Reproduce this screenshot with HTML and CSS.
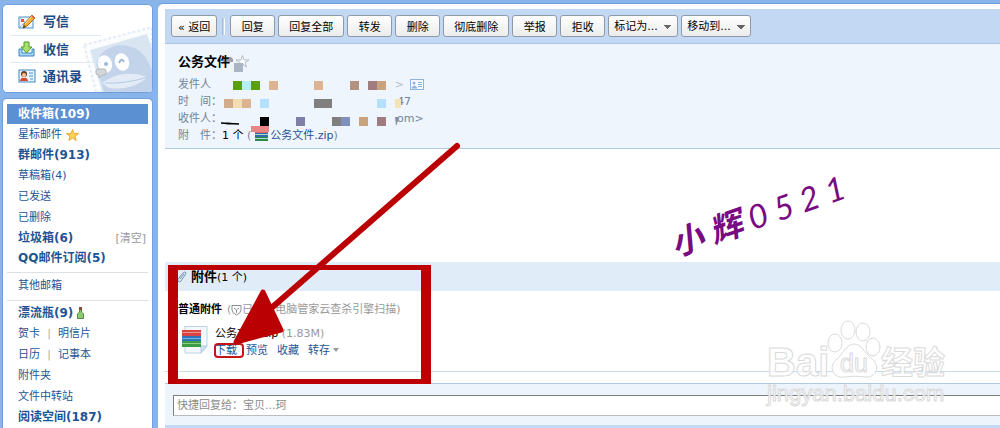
FILE: index.html
```
<!DOCTYPE html>
<html lang="zh-CN">

<head>
    <meta charset="utf-8">
    <title>QQ邮箱 - 公务文件</title>
    <link rel="stylesheet" href="styles.css">
</head>

<body>
    <div class="page">
        <div class="sidebar">
            <div class="card mainNav">
                <svg class="stamp" width="70" height="65" viewBox="0 0 70 65">
                    <path d="M2 18 L67 1 L70 1 V65 H14 Z" fill="#fbfcfe" stroke="#e3ebf5" stroke-width="2" stroke-dasharray="3 2" />
                    <path d="M8 23 L65 7 L70 22 V65 H20 Z" fill="#dae5f2" />
                    <path d="M14 36 Q20 20 38 18 Q62 18 70 44 V65 H22 Z" fill="#c3d4ea" />
                    <ellipse cx="23" cy="37" rx="7" ry="9" transform="rotate(-18 23 37)" fill="#fff" />
                    <ellipse cx="40" cy="35" rx="7" ry="9" transform="rotate(-18 40 35)" fill="#fff" />
                    <circle cx="24" cy="37" r="2" fill="#9db7d9" />
                    <path d="M37 36 q3 -6 5 -1" fill="none" stroke="#9db7d9" stroke-width="2" />
                    <path d="M20 56 Q40 41 66 50 Q50 64 27 61 Z" fill="#e3ecf6" />
                    <path d="M23 56 Q44 57 66 50" fill="none" stroke="#b4c8e1" stroke-width="1" />
                    <path d="M16 42 h6 q2 0 2 2 v2 q0 2 -2 2 h-2 l-3 3 v-3 h-1 q-2 0 -2 -2 v-2 q0 -2 2 -2z" fill="#d4d6d9" stroke="#b3b7bd" />
                </svg>
                <a class="navItem" href="#">
                    <svg width="18" height="16" viewBox="0 0 18 16">
                        <rect x="1" y="3" width="14" height="11" fill="#eef7ff" stroke="#4b8fc9" />
                        <path d="M2 4 l5 4 M2 13 l5 -5" stroke="#8fc0e6" />
                        <rect x="3" y="5" width="3" height="3" fill="#e0573b" />
                        <path d="M5 14 L6 10 L14 1 L17 4 L9 12 Z" fill="#fbb034" stroke="#b56a12" />
                        <path d="M7 10 L14 2" stroke="#ffe29a" />
                        <path d="M13 2 L14 1 L17 4 L16 5 Z" fill="#e5654a" />
                        <path d="M5 14 L6 11 L8 13 Z" fill="#5b3c1d" />
                    </svg>
                    写信
                </a>
                <a class="navItem" href="#">
                    <svg width="18" height="16" viewBox="0 0 18 16">
                        <path d="M1 8 H4 V12 H14 V8 H16 V15 H1 Z" fill="#a9d4f3" stroke="#3d85c0" />
                        <path d="M6 1 H11 V6 H14 L8.500 12 L3 6 H6 Z" fill="#a7e06b" stroke="#4e9a2c" />
                    </svg>
                    收信
                </a>
                <a class="navItem" href="#">
                    <svg width="18" height="16" viewBox="0 0 18 16">
                        <rect x="1" y="2" width="16" height="12" fill="#e6f4ff" stroke="#3f87c4" />
                        <circle cx="6" cy="6" r="3" fill="#6b3a1e" />
                        <circle cx="6" cy="7" r="2" fill="#f6c597" />
                        <path d="M2 13 Q3 9 6 10 Q9 9 10 13 Z" fill="#d9482b" />
                        <path d="M11 5 h4 M11 8 h4 M12 11 h3" stroke="#4c93cd" />
                    </svg>
                    通讯录
                </a>
            </div>

            <div class="card folders">
                <ul class="folderList">
                    <li class="unread selected"><a href="#">收件箱(109)</a></li>
                    <li>
                        <a href="#">星标邮件</a>
                        <svg class="inlineIcon" width="13" height="12" viewBox="0 0 13 12">
                            <path d="M6.500 0.500 L8 4.500 L12.500 4.600 L9 7.300 L10.200 11.500 L6.500 9 L2.800 11.500 L4 7.300 L0.500 4.600 L5 4.500 Z" fill="#ffd152" stroke="#e5a83a" />
                        </svg>
                    </li>
                    <li class="unread"><a href="#">群邮件(913)</a></li>
                    <li><a href="#">草稿箱(4)</a></li>
                    <li><a href="#">已发送</a></li>
                    <li><a href="#">已删除</a></li>
                    <li class="unread"><a href="#">垃圾箱(6)</a><a class="clear" href="#">[清空]</a></li>
                    <li class="unread"><a href="#">QQ邮件订阅(5)</a></li>
                </ul>
                <ul class="folderList">
                    <li><a href="#">其他邮箱</a></li>
                </ul>
                <ul class="folderList">
                    <li class="unread">
                        <a href="#">漂流瓶(9)</a>
                        <svg class="inlineIcon" width="7" height="12" viewBox="0 0 7 12">
                            <path d="M2.500 3 H4.500 V5 L6.500 7 V11.500 H0.500 V7 L2.500 5 Z" fill="#8fc973" stroke="#4f8f3c" />
                            <rect x="2" y="0" width="3" height="3" fill="#8b4a3a" />
                        </svg>
                    </li>
                    <li><a href="#">贺卡</a><span class="bar">|</span><a href="#">明信片</a></li>
                    <li><a href="#">日历</a><span class="bar">|</span><a href="#">记事本</a></li>
                    <li><a href="#">附件夹</a></li>
                    <li><a href="#">文件中转站</a></li>
                    <li class="unread"><a href="#">阅读空间(187)</a></li>
                </ul>
            </div>
        </div>

        <div class="main">
            <div class="toolbar">
                <button type="button" class="btn">« 返回</button>
                <span class="divider"></span>
                <button type="button" class="btn">回复</button>
                <button type="button" class="btn">回复全部</button>
                <button type="button" class="btn">转发</button>
                <button type="button" class="btn">删除</button>
                <button type="button" class="btn">彻底删除</button>
                <button type="button" class="btn">举报</button>
                <button type="button" class="btn">拒收</button>
                <select class="btn menu" aria-label="标记为">
                    <option>标记为...</option>
                </select>
                <select class="btn menu" aria-label="移动到">
                    <option>移动到...</option>
                </select>
            </div>

            <div class="mailInfo">
                <h1 class="subject">公务文件</h1>
                <div class="infoRow">
                    <span class="label">发件人</span>
                    <span class="senderEnd">&gt;</span>
                    <svg width="14" height="11" viewBox="0 0 14 11">
                        <rect x="0.500" y="0.500" width="13" height="10" fill="#f3f9ff" stroke="#8db4dc" />
                        <circle cx="4" cy="4" r="1.500" fill="#8db4dc" />
                        <path d="M2 9 q2 -4 5 0z M8 3.500 h4 M8 5.500 h4 M8 7.500 h4" fill="#8db4dc" stroke="#8db4dc" />
                    </svg>
                </div>
                <div class="infoRow"><span class="label">时　间：</span><span class="rowEnd">47</span></div>
                <div class="infoRow"><span class="label">收件人：</span><span class="rowEnd">om&gt;</span></div>
                <div class="infoRow">
                    <span class="label">附　件：</span>
                    <span><span class="count">1 个</span> (</span>
                    <svg class="zipSmall" width="13" height="11" viewBox="0 0 13 11">
                        <rect width="13" height="3" fill="#d96a6a" />
                        <rect y="3" width="13" height="4" fill="#2f6cab" />
                        <rect y="7" width="13" height="4" fill="#2f8a48" />
                        <path d="M0 4.500 h13 M0 8.500 h13" stroke="#a8dcd0" />
                    </svg>
                    <span><a href="#">公务文件.zip</a>)</span>
                </div>

                <!-- star, and the blocks that hide the addresses -->
                <svg class="mosaic" width="240" height="90" viewBox="0 0 240 90">
                    <path d="M64.500 11.500 L66 16 H71 L67 18.500 L68.500 23 L64.500 20 L60.500 23 L62 18.500 L58 16 H63 Z" fill="#fbfdff" stroke="#b4bcc7" />
                    <path d="M45 13 h8 l2 2 v3 h-10z" fill="#22262c" opacity=".4" />
                    <rect x="56" y="19" width="9" height="9" fill="#a9b5c3" />
                    <rect x="55" y="37" width="9" height="9" fill="#5aa00c" />
                    <rect x="64" y="37" width="9" height="9" fill="#b4f0f0" />
                    <rect x="73" y="37" width="9" height="9" fill="#5aa00c" />
                    <rect x="91" y="37" width="9" height="9" fill="#dcb491" />
                    <rect x="136" y="37" width="9" height="9" fill="#dcb491" />
                    <rect x="172" y="37" width="9" height="9" fill="#b49180" />
                    <rect x="190" y="37" width="9" height="9" fill="#a07c80" />
                    <rect x="199" y="37" width="9" height="9" fill="#c8a37d" />
                    <rect x="46" y="55" width="9" height="9" fill="#d2aa8c" />
                    <rect x="55" y="55" width="9" height="9" fill="#f3deb4" />
                    <rect x="64" y="55" width="9" height="9" fill="#dcb491" />
                    <rect x="82" y="55" width="9" height="9" fill="#b4e0fb" />
                    <rect x="136" y="55" width="18" height="9" fill="#7f7f7f" />
                    <rect x="199" y="55" width="9" height="9" fill="#b4e0fb" />
                    <rect x="217" y="55" width="6" height="9" fill="#f5e3b8" />
                    <path d="M43 79 H50 L61 80 H50 Z" fill="#000" stroke="#000" />
                    <rect x="82" y="73" width="9" height="9" fill="#000" />
                    <rect x="118" y="73" width="9" height="9" fill="#7f7fa8" />
                    <rect x="154" y="73" width="9" height="9" fill="#7f7f7f" />
                    <rect x="163" y="73" width="9" height="9" fill="#7f91bb" />
                    <rect x="181" y="73" width="9" height="9" fill="#c8a37d" />
                    <rect x="199" y="73" width="9" height="9" fill="#a07c80" />
                    <path d="M217 73 h3 v4 l-2 5 z" fill="#8b8f96" />
                    <rect x="73" y="82" width="18" height="6" fill="#ea8585" />
                </svg>
            </div>

            <div class="mailBody">
                <div class="signature">
                    <span class="han">小</span><span class="han">辉</span><span>0</span><span>5</span><span>2</span><span>1</span>
                </div>
            </div>

            <div class="attachTitle">
                <svg width="10" height="13" viewBox="0 0 10 13">
                    <path d="M2 8 L6 3 Q8 1 9 3 Q9 4 8 5 L4 11 Q2 13 1 11 Q0 10 2 8 M3 9 L7 4" fill="none" stroke="#6f93bd" />
                </svg>
                <span><b>附件</b>(1 个)</span>
            </div>
            <div class="attachments">
                <div class="scanned">
                    <b>普通附件</b>
                    <span>(</span>
                    <svg width="11" height="12" viewBox="0 0 11 12">
                        <path d="M1 1.500 H10 V6 Q10 9 5.500 11 Q1 9 1 6 Z M3 4 L5.500 6 L8 4 M5.500 6 V9" fill="none" stroke="#8d8d8d" />
                    </svg>
                    <span>已经过电脑管家云查杀引擎扫描)</span>
                </div>
                <div class="file">
                    <svg width="26" height="29" viewBox="0 0 26 29">
                        <path d="M2 1.500 H25 V21 L19 28 H3 V2" fill="#f3f9fe" stroke="#b9d2e8" />
                        <path d="M25 21 L19 28 V21 Z" fill="#cfe2f3" stroke="#b0cbe3" />
                        <rect x="0" y="5" width="19" height="6" fill="#d94343" />
                        <rect x="0" y="11" width="19" height="5" fill="#2f74b8" />
                        <rect x="0" y="16" width="19" height="6" fill="#3c9c45" />
                        <path d="M0 7.500 h19" stroke="#f1938b" />
                        <path d="M0 13.500 h19" stroke="#79b2e2" />
                        <path d="M0 18.500 h19" stroke="#8ad084" />
                    </svg>
                    <div class="fileText">
                        <div>公务文件.zip <span class="size">(1.83M)</span></div>
                        <div class="fileLinks">
                            <a href="#">下载</a>
                            <a href="#">预览</a>
                            <a href="#">收藏</a>
                            <a href="#">转存<span class="caret"></span></a>
                        </div>
                    </div>
                </div>
            </div>

            <div class="quickReply">
                <input type="text" class="replyBox" aria-label="快捷回复" placeholder="快捷回复给：宝贝...珂">
            </div>
            <div class="footBar"></div>
        </div>
    </div>

    <svg class="callout" width="300" height="245" viewBox="0 0 300 245">
        <path fill="#bb0004" fill-rule="evenodd" d="M8 125 H271 V244 H8 Z M18 130 V239 H261 V130 Z" />
        <rect x="55" y="204" width="28" height="13" rx="3" fill="none" stroke="#c4161a" stroke-width="2" />
        <path d="M297 6 L108 171" stroke="#bb0004" stroke-width="6" stroke-linecap="round" />
        <path d="M103 152 L121 190 L76 202 Z" fill="#bb0004" stroke="#bb0004" stroke-width="5" stroke-linejoin="round" />
    </svg>

    <svg class="watermark" width="190" height="95" viewBox="0 0 190 95">
        <text class="wmBai" x="4" y="61">Bai</text>
        <g fill="#fff" stroke="#dadada">
            <ellipse cx="72" cy="28" rx="7" ry="9" />
            <ellipse cx="85" cy="15" rx="7" ry="9" />
            <ellipse cx="100" cy="17" rx="7" ry="9" />
            <ellipse cx="110" cy="32" rx="7" ry="9" />
            <path d="M91 29 C99 29 101 38 108 43 C118 50 114 63 102 62 C94 61 89 61 82 62 C69 64 65 51 74 44 C81 38 83 29 91 29 Z" />
        </g>
        <text class="wmDu" x="77" y="57">du</text>
        <text class="wmHan" x="118" y="59">经验</text>
        <text class="wmUrl" x="4" y="86">jingyan.baidu.com</text>
    </svg>
</body>

</html>
```

FILE: styles.css
```
* {
    box-sizing: border-box;
}

body {
    margin: 0;
    font-family: "DejaVu Sans", "Noto Sans CJK SC", sans-serif;
    font-size: 11px;
    line-height: 17px;
    color: #000;
    background: #88b4ea;
}

a {
    color: #1e5494;
    text-decoration: none;
}

.page {
    display: flex;
    gap: 5px;
    min-height: 100vh;
    padding: 4px 0 0 2px;
}

/* left column */
.sidebar {
    display: flex;
    flex-direction: column;
    flex: 0 0 151px;
    gap: 5px;
}

.card {
    background: #fff;
    border: 1px solid #6f9fdb;
    border-radius: 5px;
}

.mainNav {
    position: relative;
    padding: 3px 8px;
    overflow: hidden;
}

.stamp {
    position: absolute;
    right: 0;
    bottom: 0;
}

.navItem {
    position: relative;
    display: flex;
    align-items: center;
    gap: 7px;
    height: 27px;
    width: 90px;
    padding-left: 7px;
    font-size: 13px;
    font-weight: bold;
    color: #1c4a86;
}

.navItem + .navItem {
    border-top: 1px solid #dfe9f5;
}

.folders {
    flex: 1;
    padding: 5px 4px 0;
    border-bottom: 0;
    border-radius: 5px 5px 0 0;
}

.folderList {
    margin: 0;
    padding: 0;
    list-style: none;
}

.folderList + .folderList {
    margin-top: 4px;
    padding-top: 2px;
    border-top: 1px solid #dde1e6;
}

.folderList li {
    display: flex;
    align-items: center;
    height: 21px;
    padding-left: 11px;
}

.folderList .unread {
    height: 20px;
    font-size: 12px;
    font-weight: bold;
}

.folderList .selected {
    background: #5b91d2;
}

.selected a {
    color: #fff;
}

.inlineIcon {
    margin-left: 4px;
}

.bar {
    width: 18px;
    text-align: center;
    color: #b5a9a9;
}

.folderList .clear {
    margin-left: auto;
    padding-right: 2px;
    font-size: 11px;
    font-weight: normal;
    color: #999;
}

/* reading pane */
.main {
    display: flex;
    flex-direction: column;
    flex: 1;
    min-width: 0;
    padding: 5px 0 0 7px;
    background: #fff;
    border-radius: 5px 0 0 0;
    box-shadow: 0 -1px #6f9fdb;
}

.toolbar {
    display: flex;
    align-items: center;
    gap: 3px;
    height: 35px;
    padding-left: 6px;
    background: #c3d9f3;
    border-bottom: 1px solid #a9c6e6;
}

.btn {
    height: 22px;
    min-width: 45px;
    padding: 0 10px;
    font-family: inherit;
    font-size: 11px;
    color: #000;
    white-space: nowrap;
    background: linear-gradient(#fff, #ececec);
    border: 1px solid #8f9aa8;
    border-radius: 3px;
}

.toolbar .btn:first-child {
    padding: 0 6px;
}

.divider {
    width: 3px;
    height: 17px;
    margin: 0 2px;
    border-left: 1px solid #a3b9d4;
    border-right: 1px solid #fff;
}

.menu {
    width: 70px;
    padding: 0 5px;
    appearance: none;
    background: linear-gradient(45deg, transparent 50%, #666 50%) 55px 9px / 4px 4px no-repeat, linear-gradient(315deg, transparent 50%, #666 50%) 59px 9px / 4px 4px no-repeat, linear-gradient(#fff, #ececec);
}

.mailInfo {
    position: relative;
    padding: 9px 0 4px 13px;
    color: #74829a;
    background: #eff5fc;
    border-bottom: 1px solid #afc8e4;
}

.subject {
    margin: 0 0 5px;
    font-size: 13px;
    line-height: 18px;
    color: #000;
}

.infoRow {
    display: flex;
    align-items: center;
    height: 17px;
}

.label {
    width: 44px;
}

.senderEnd {
    width: 188px;
    padding-right: 6px;
    text-align: right;
    color: #b3bdca;
}

.rowEnd {
    margin-left: 175px;
}

.count {
    color: #000;
}

.zipSmall {
    margin: 0 2px 0 4px;
}

.mosaic {
    position: absolute;
    left: 13px;
    top: 0;
}

.mailBody {
    position: relative;
    min-height: 113px;
}

.signature {
    position: absolute;
    left: 501px;
    top: 46px;
    display: flex;
    align-items: center;
    gap: 8px;
    font-family: Lato, "Noto Sans CJK SC", sans-serif;
    font-size: 33px;
    font-style: italic;
    line-height: 40px;
    color: #780a82;
    transform: rotate(-19deg);
}

.han {
    font-weight: bold;
}

.attachTitle {
    display: flex;
    align-items: center;
    gap: 4px;
    height: 29px;
    padding-left: 12px;
    background: #e1ecf9;
}

.attachTitle b {
    font-size: 13px;
}

.attachments {
    padding: 10px 0 12px 13px;
    border-bottom: 1px solid #c9ddf1;
}

.scanned {
    display: flex;
    align-items: center;
    color: #999;
}

.scanned b {
    margin-right: 5px;
    color: #000;
}

.file {
    display: flex;
    align-items: flex-start;
    gap: 7px;
    padding: 7px 0 0 4px;
}

.size {
    color: #999;
}

.fileLinks {
    display: flex;
    gap: 9px;
}

.caret {
    display: inline-block;
    margin: 0 0 2px 3px;
    border: 3px solid transparent;
    border-top: 4px solid #999;
    border-bottom: 0;
}

.quickReply {
    margin-top: 11px;
    padding: 11px 0 9px 8px;
    background: #eef4fc;
    border-top: 1px solid #afc8e4;
}

.replyBox {
    display: block;
    width: 100%;
    height: 21px;
    padding: 0 3px;
    font-family: inherit;
    font-size: 11px;
    border: 1px solid #b9bcc0;
    border-top: 1px solid #7d7d7d;
    border-left: 1px solid #7d7d7d;
    border-right: 0;
}

.replyBox::placeholder {
    color: #8c8c8c;
}

.footBar {
    flex: 1;
    min-height: 3px;
    background: #c3d9f3;
}

/* layers over the page */
.callout {
    position: absolute;
    left: 160px;
    top: 140px;
}

.watermark {
    position: absolute;
    left: 763px;
    top: 315px;
    font-family: "Liberation Sans", "Noto Sans CJK SC", sans-serif;
}

.watermark text {
    fill: #fff;
    fill-opacity: .7;
    stroke: #dadada;
    stroke-width: 1px;
}

.wmBai {
    font-size: 40px;
    font-weight: bold;
}

.wmDu {
    font-size: 25px;
}

.wmHan {
    font-size: 32px;
    font-weight: bold;
}

.wmUrl {
    font-size: 22px;
}
```
